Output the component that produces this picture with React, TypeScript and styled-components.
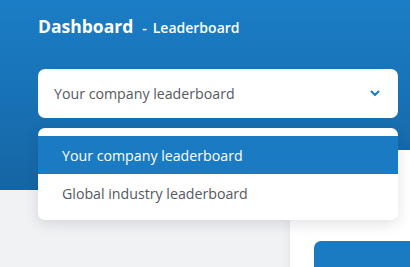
import React, { useState } from "react"
import styled, { createGlobalStyle } from "styled-components"

const GlobalStyle = createGlobalStyle`
    html, body {
        margin:0;
        padding:0;
        background:#f0f1f3;
        font-family:"Open Sans", "Liberation Sans", sans-serif;
        overflow:hidden;
    }
`

const Page = styled.div`
    width:410px;
    height:267px;
    overflow:hidden;
    background:#f0f1f3;
`

const Header = styled.div`
    height:190px;
    box-sizing:border-box;
    padding:14px 12px 0 38px;
    background:linear-gradient(180deg, #1b7dc5 0%, #1872b6 50%, #1565a3 100%);
`

const TitleRow = styled.div`
    display:flex;
    align-items:baseline;
    color:white;
    height:25px;
`

const Title = styled.h1`
    margin:0;
    font-size:17.5px;
    font-weight:700;
`

const SubTitle = styled.span`
    font-size:14px;
    font-weight:600;
    margin-left:9px;
`

const Dash = styled.span`
    margin-right:6px;
`

const SelectWrap = styled.div`
    position:relative;
    margin-top:30px;
    width:360px;
`

const SelectBox = styled.div`
    height:49px;
    box-sizing:border-box;
    background:white;
    border-radius:7px;
    display:flex;
    align-items:center;
    justify-content:space-between;
    padding:0 18px 0 16px;
    color:#55595e;
    font-size:14.2px;
    cursor:pointer;
`

const Menu = styled.ul`
    position:absolute;
    top:59px;
    left:0;
    right:0;
    margin:0;
    padding:8px 0;
    list-style:none;
    background:white;
    border-radius:7px;
    box-shadow:0 4px 14px rgba(40, 50, 70, 0.14);
    z-index:2;
`

const MenuItem = styled.li<{ $active: boolean }>`
    height:38px;
    display:flex;
    align-items:center;
    padding-left:24px;
    font-size:14.2px;
    color:${p => p.$active ? "white" : "#55595e"};
    background:${p => p.$active ? "#1a7bc2" : "white"};
    cursor:pointer;
`

const Content = styled.div`
    display:grid;
    grid-template-columns:290px 1fr;
    height:77px;
`

const LeftArea = styled.div`
    background:#f1f2f4;
`

const RightCard = styled.div`
    margin-top:-40px;
    background:white;
    box-shadow:0 0 10px rgba(40, 50, 70, 0.08);
    padding:91px 0 0 24px;
`

const BlueButton = styled.div`
    height:40px;
    background:#1a7bc2;
    border-radius:7px 0 0 0;
`

const Chevron = () => (
    <svg width="10" height="7" viewBox="0 0 10 7">
        <path d="M1.5 1.5 L5 5 L8.5 1.5" fill="none" stroke="#1a7bc2" strokeWidth="2" strokeLinecap="round" strokeLinejoin="round" />
    </svg>
)

const options = ["Your company leaderboard", "Global industry leaderboard"]

export default function App() {
    const [selected, setSelected] = useState<number>(0)
    const [open, setOpen] = useState<boolean>(true)

    return (
        <Page>
            <GlobalStyle />
            <Header>
                <TitleRow>
                    <Title>Dashboard</Title>
                    <SubTitle><Dash>-</Dash>Leaderboard</SubTitle>
                </TitleRow>
                <SelectWrap>
                    <SelectBox onClick={() => setOpen(!open)}>
                        <span>{options[0]}</span>
                        <Chevron />
                    </SelectBox>
                    {open && (
                        <Menu>
                            {options.map((o, i) => (
                                <MenuItem key={o} $active={i === selected} onClick={() => setSelected(i)}>{o}</MenuItem>
                            ))}
                        </Menu>
                    )}
                </SelectWrap>
            </Header>
            <Content>
                <LeftArea />
                <RightCard>
                    <BlueButton />
                </RightCard>
            </Content>
        </Page>
    )
}
